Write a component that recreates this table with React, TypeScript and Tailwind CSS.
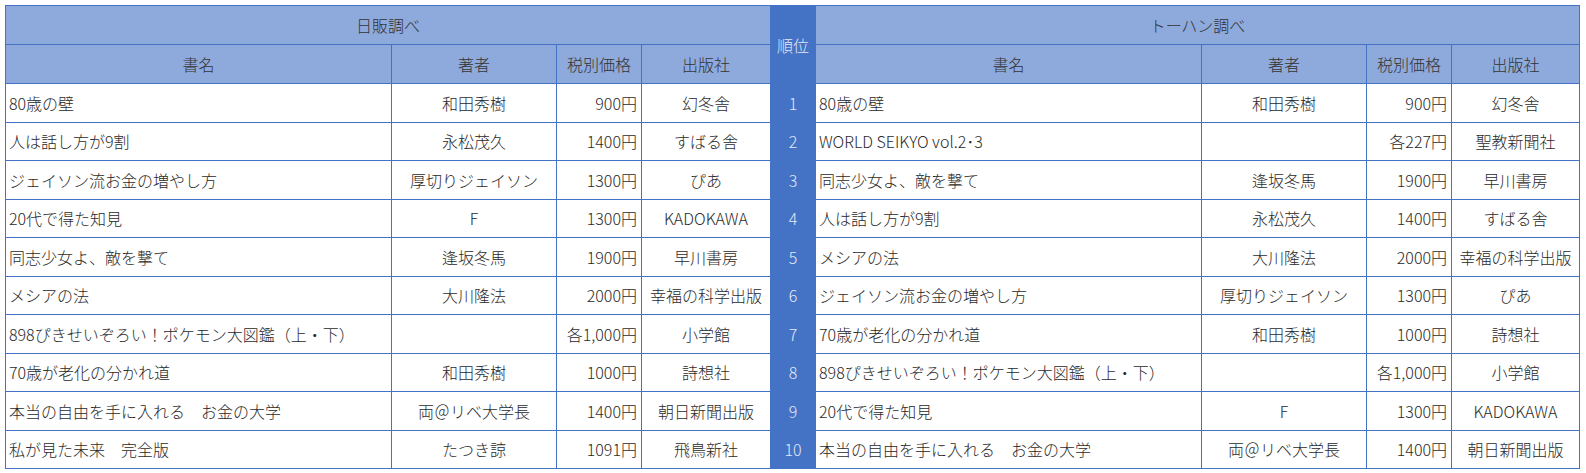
import React from "react";

type Row = [string, string, string, string];

const nippan: Row[] = [
  ["80歳の壁", "和田秀樹", "900円", "幻冬舎"],
  ["人は話し方が9割", "永松茂久", "1400円", "すばる舎"],
  ["ジェイソン流お金の増やし方", "厚切りジェイソン", "1300円", "ぴあ"],
  ["20代で得た知見", "F", "1300円", "KADOKAWA"],
  ["同志少女よ、敵を撃て", "逢坂冬馬", "1900円", "早川書房"],
  ["メシアの法", "大川隆法", "2000円", "幸福の科学出版"],
  ["898ぴきせいぞろい！ポケモン大図鑑（上・下）", "", "各1,000円", "小学館"],
  ["70歳が老化の分かれ道", "和田秀樹", "1000円", "詩想社"],
  ["本当の自由を手に入れる　お金の大学", "両＠リベ大学長", "1400円", "朝日新聞出版"],
  ["私が見た未来　完全版", "たつき諒", "1091円", "飛鳥新社"],
];

const tohan: Row[] = [
  ["80歳の壁", "和田秀樹", "900円", "幻冬舎"],
  ["WORLD SEIKYO vol.2･3", "", "各227円", "聖教新聞社"],
  ["同志少女よ、敵を撃て", "逢坂冬馬", "1900円", "早川書房"],
  ["人は話し方が9割", "永松茂久", "1400円", "すばる舎"],
  ["メシアの法", "大川隆法", "2000円", "幸福の科学出版"],
  ["ジェイソン流お金の増やし方", "厚切りジェイソン", "1300円", "ぴあ"],
  ["70歳が老化の分かれ道", "和田秀樹", "1000円", "詩想社"],
  ["898ぴきせいぞろい！ポケモン大図鑑（上・下）", "", "各1,000円", "小学館"],
  ["20代で得た知見", "F", "1300円", "KADOKAWA"],
  ["本当の自由を手に入れる　お金の大学", "両＠リベ大学長", "1400円", "朝日新聞出版"],
];

const font = {
  fontFamily: '"Noto Sans CJK JP", "Noto Sans", sans-serif',
};

const th =
  "border border-[#4472C4] bg-[#8EA9DB] text-[#333] font-light text-center px-1 whitespace-nowrap";
const td = "border border-[#4472C4] text-[#2a2a2a] font-light px-[3px] whitespace-nowrap overflow-hidden";

function Cells({ r }: { r: Row }) {
  return (
    <>
      <td className={`${td} text-left`}>{r[0]}</td>
      <td className={`${td} text-center`}>{r[1]}</td>
      <td className={`${td} text-right pr-[4px]`}>{r[2]}</td>
      <td className={`${td} text-center`}>{r[3]}</td>
    </>
  );
}

export default function App() {
  return (
    <div className="bg-white w-[1586px] h-[473px] pt-[5px] pl-[5px]" style={font}>
      <table className="table-fixed border-collapse w-[1575px] text-[16px] leading-none">
        <colgroup>
          <col className="w-[386px]" />
          <col className="w-[165px]" />
          <col className="w-[85px]" />
          <col className="w-[129px]" />
          <col className="w-[45px]" />
          <col className="w-[386px]" />
          <col className="w-[165px]" />
          <col className="w-[85px]" />
          <col className="w-[128px]" />
        </colgroup>
        <thead>
          <tr className="h-[39px]">
            <th colSpan={4} className={th}>
              日販調べ
            </th>
            <th
              rowSpan={2}
              className="border border-[#4472C4] bg-[#4472C4] text-[#e3e9f6] font-light text-center"
            >
              順位
            </th>
            <th colSpan={4} className={th}>
              トーハン調べ
            </th>
          </tr>
          <tr className="h-[39px]">
            <th className={th}>書名</th>
            <th className={th}>著者</th>
            <th className={th}>税別価格</th>
            <th className={th}>出版社</th>
            <th className={th}>書名</th>
            <th className={th}>著者</th>
            <th className={th}>税別価格</th>
            <th className={th}>出版社</th>
          </tr>
        </thead>
        <tbody>
          {nippan.map((r, i) => (
            <tr key={i} className="h-[38.5px]">
              <Cells r={r} />
              <td className="border border-[#4472C4] bg-[#4472C4] text-[#e3e9f6] font-light text-center">
                {i + 1}
              </td>
              <Cells r={tohan[i]} />
            </tr>
          ))}
        </tbody>
      </table>
    </div>
  );
}
